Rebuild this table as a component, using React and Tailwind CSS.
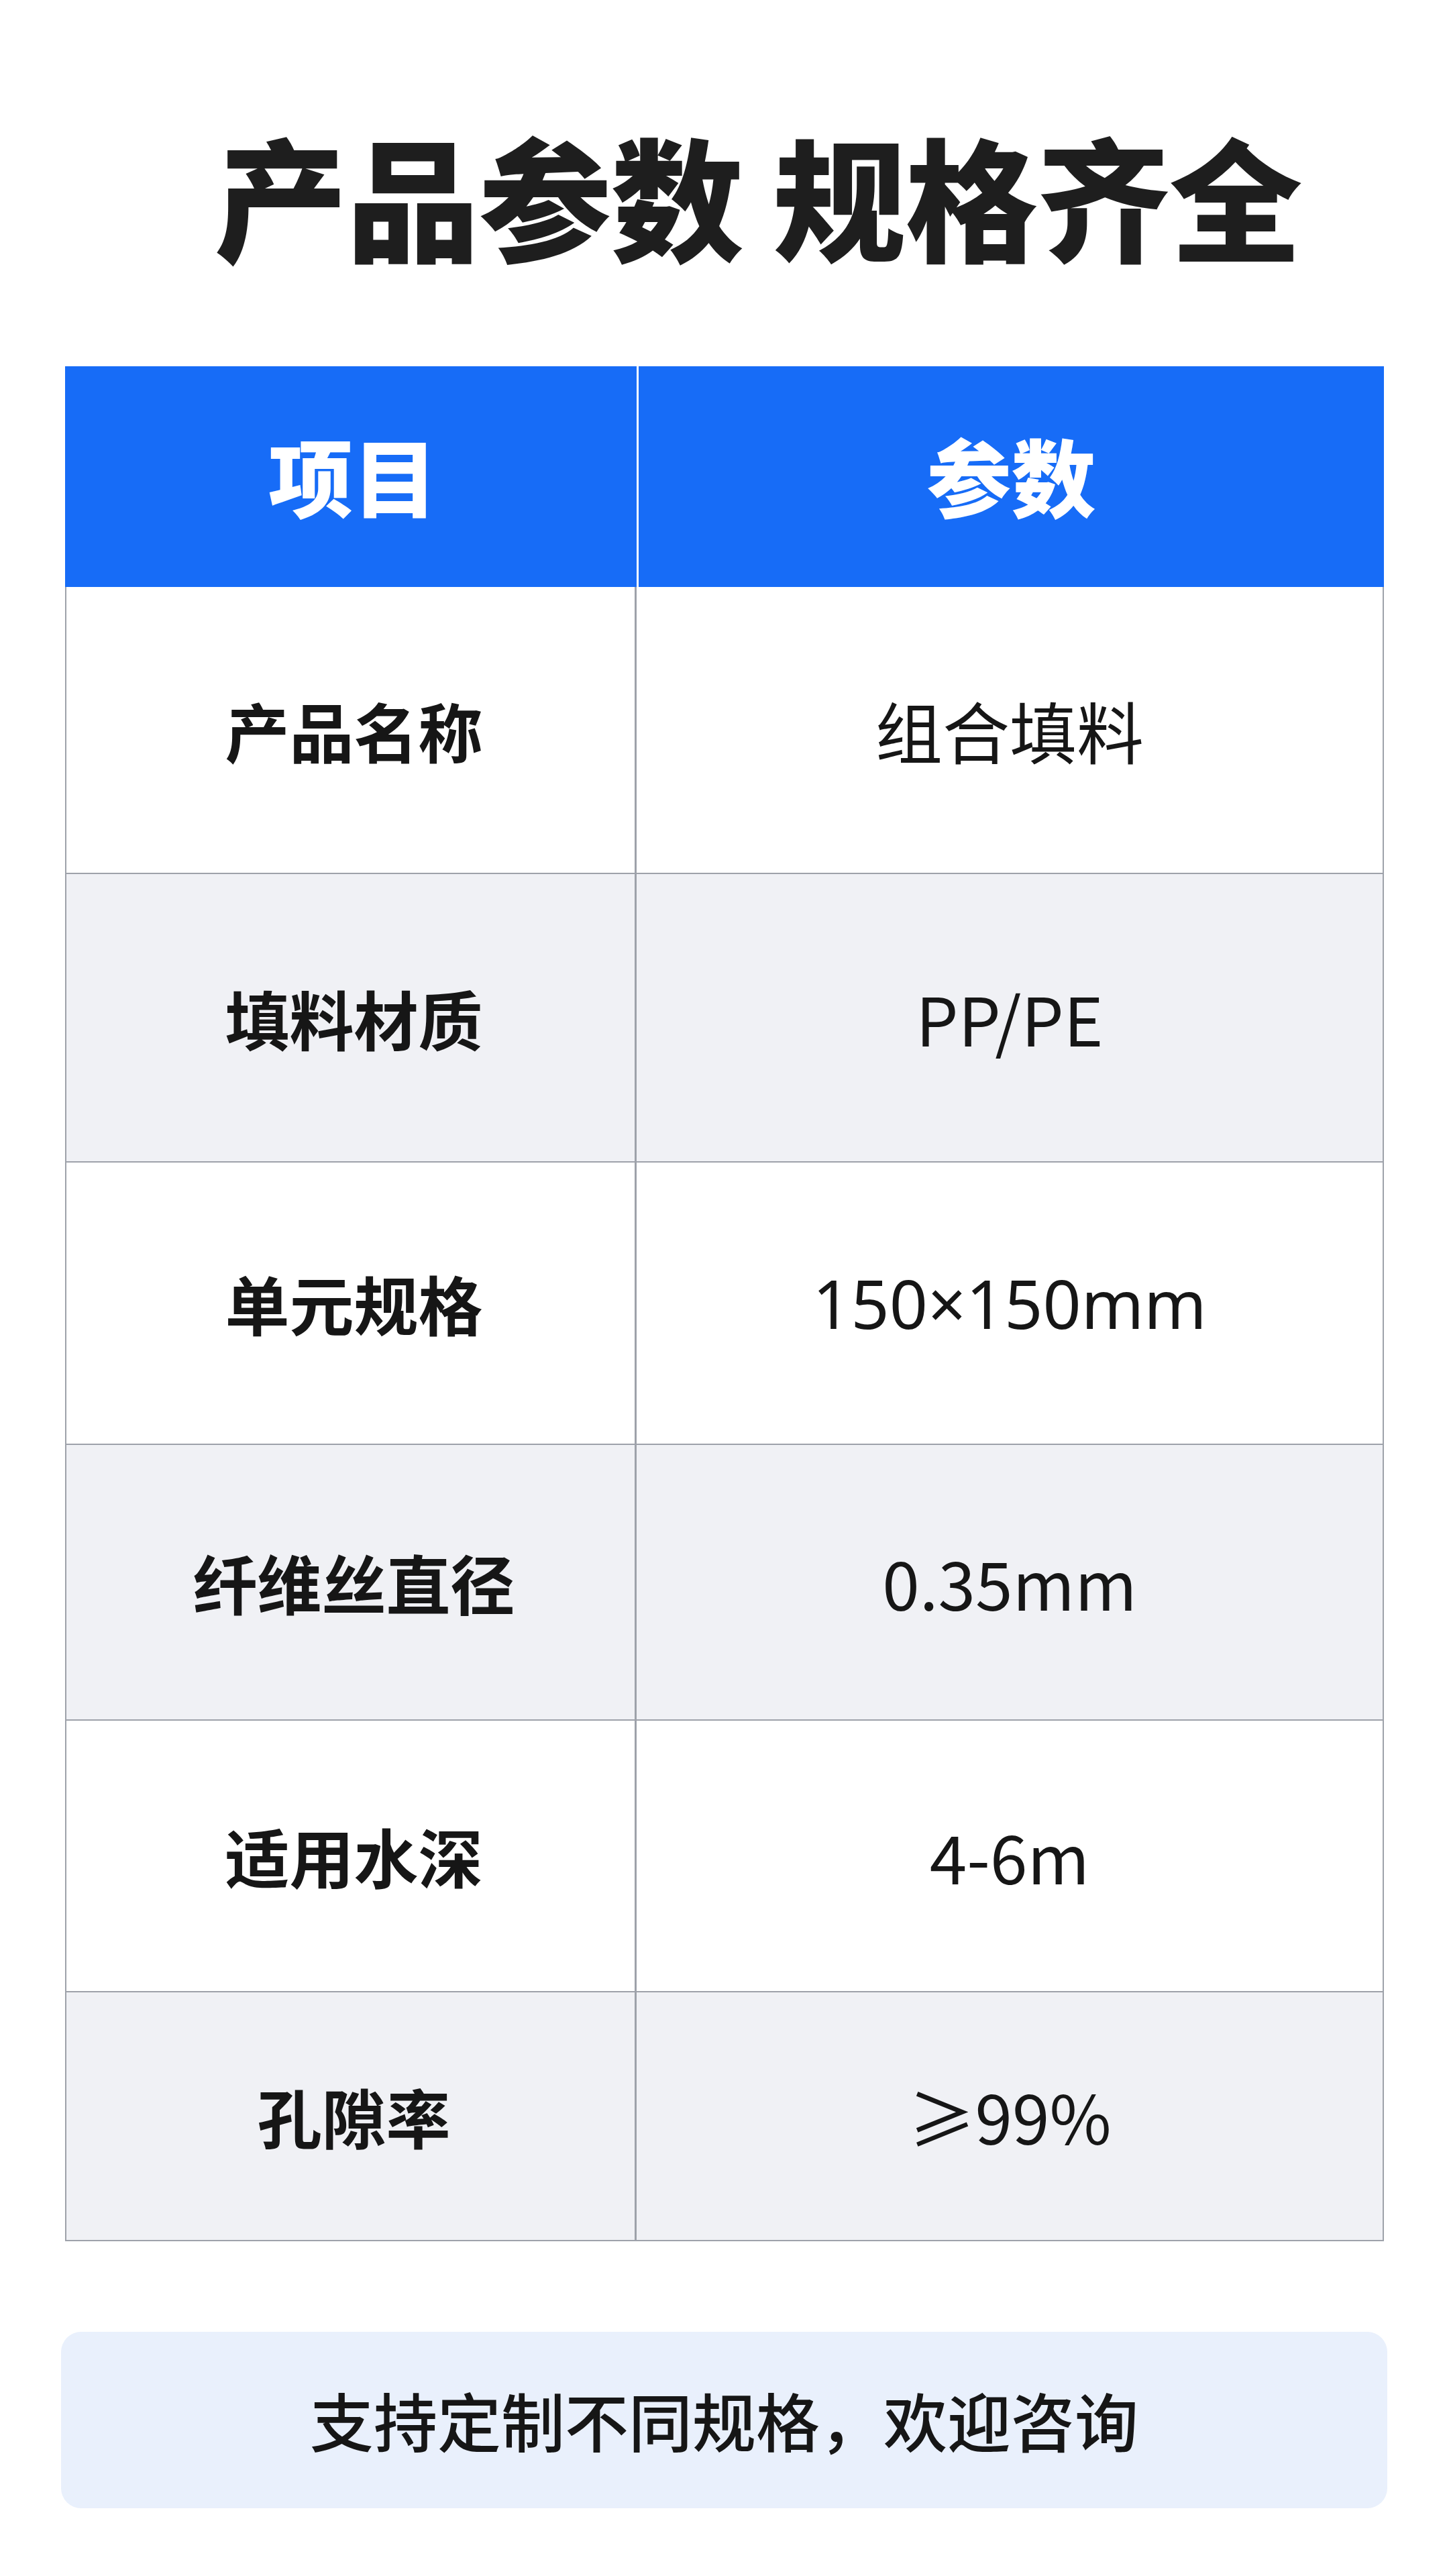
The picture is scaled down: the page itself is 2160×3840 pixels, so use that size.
const rows = [
  { label: "产品名称", value: "组合填料", h: "h-[428px]", bg: "bg-white" },
  { label: "填料材质", value: "PP/PE", h: "h-[430px]", bg: "bg-[#f0f1f5]" },
  { label: "单元规格", value: "150×150mm", h: "h-[421px]", bg: "bg-white", latin: true },
  { label: "纤维丝直径", value: "0.35mm", h: "h-[411px]", bg: "bg-[#f0f1f5]" },
  { label: "适用水深", value: "4-6m", h: "h-[405px]", bg: "bg-white" },
  { label: "孔隙率", value: "≥99%", h: "h-[371px]", bg: "bg-[#f0f1f5]" },
];

const cjk = "font-['Noto_Sans_CJK_SC','Noto_Sans',sans-serif]";

export default function App() {
  return (
    <div className={`w-[2160px] h-[3840px] bg-white flex flex-col ${cjk} text-[#161616]`}>
      {/* Title */}
      <h1 className="pt-[170px] pl-[100px] text-center text-[198px] leading-[1.2] font-black tracking-[-1px] text-[#1e1e1e]">
        产品参数 规格齐全
      </h1>

      {/* Table */}
      <div className="mt-[138px] mx-[97px] flex flex-col">
        <div className="flex h-[329px] bg-[#176cf7] text-white text-[126px] font-black">
          <div className="w-[852px] flex items-center justify-center pb-[6px] pl-[6px]">项目</div>
          <div className="w-[3px] bg-white" />
          <div className="flex-1 flex items-center justify-center pb-[6px]">参数</div>
        </div>
        {rows.map((r) => (
          <div
            key={r.label}
            className={`flex ${r.h} ${r.bg} border-x-2 border-b-2 border-[#9ea2aa]`}
          >
            <div className="w-[850px] flex items-center justify-center pl-[10px] border-r-[3px] border-[#9ea2aa] text-[96px] font-bold">
              {r.label}
            </div>
            <div
              className={`flex-1 flex items-center justify-center text-[100px] font-normal ${
                r.latin ? "font-['Noto_Sans','Noto_Sans_CJK_SC',sans-serif] text-[98px]" : ""
              }`}
            >
              {r.value}
            </div>
          </div>
        ))}
      </div>

      {/* Note */}
      <div className="mt-[135px] ml-[91px] w-[1977px] h-[263px] rounded-[30px] bg-[#e9f0fc] flex items-center justify-center text-[95px] font-medium text-[#161616]">
        支持定制不同规格，欢迎咨询
      </div>
    </div>
  );
}
